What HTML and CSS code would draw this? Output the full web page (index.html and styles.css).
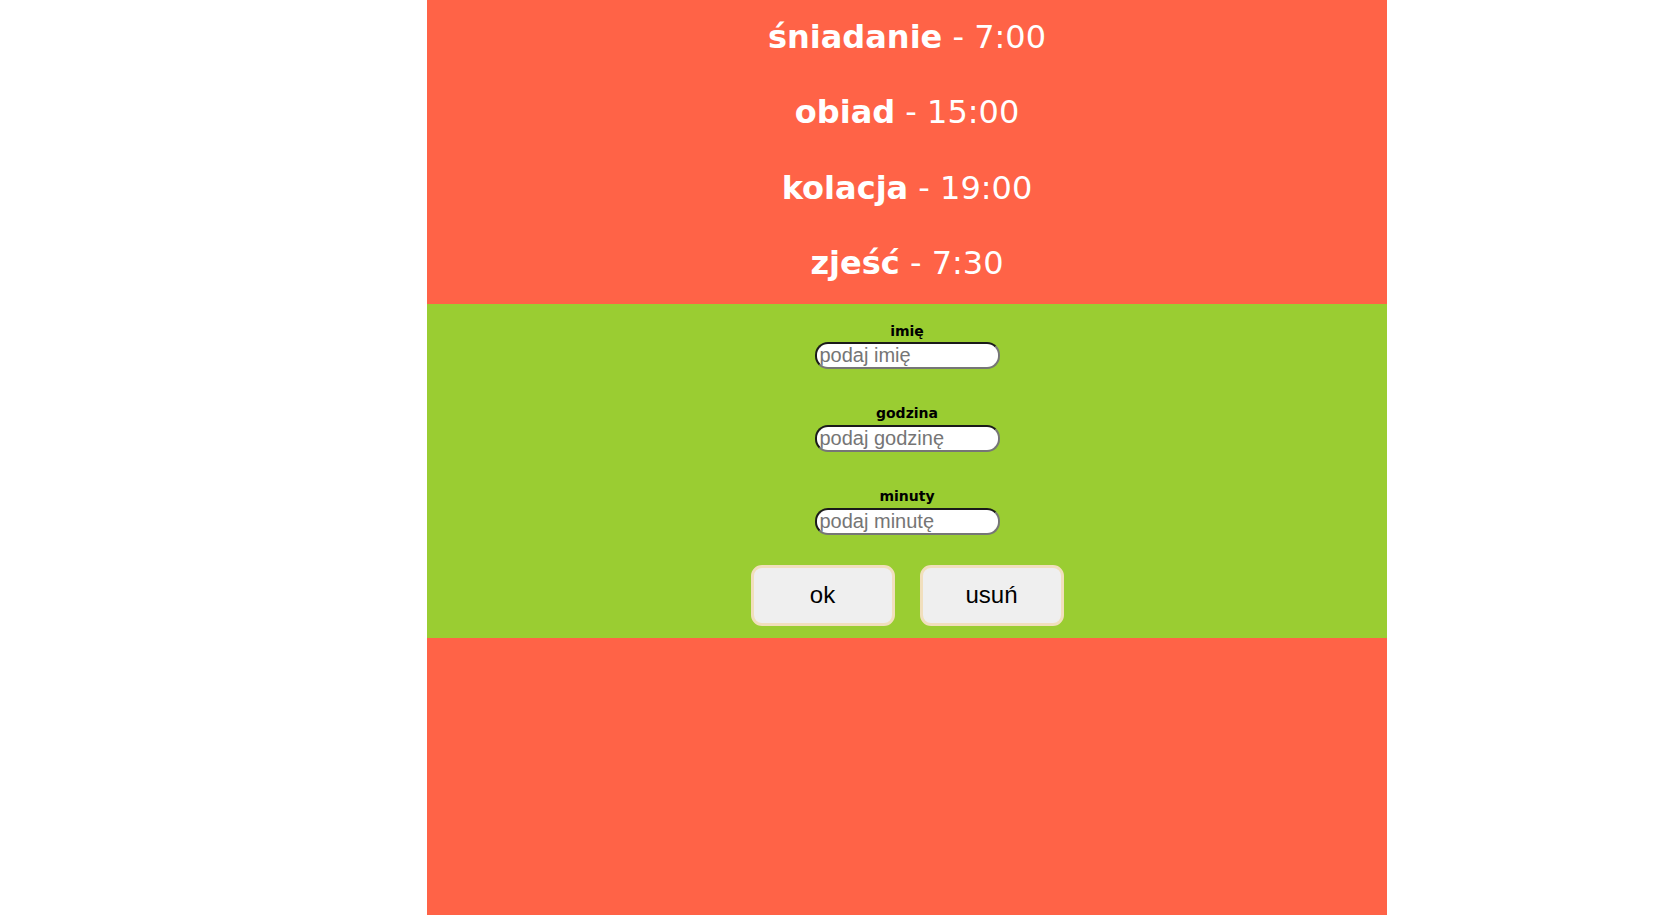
FILE: index.html
```html
<!DOCTYPE html>
<html lang="pl">
<head>
<meta charset="utf-8">
<title>Posiłki</title>
<link rel="stylesheet" href="styles.css">
</head>
<body>
<div class="page">
  <header class="menu">
    <p class="meal"><b>śniadanie</b> - 7:00</p>
    <p class="meal"><b>obiad</b> - 15:00</p>
    <p class="meal"><b>kolacja</b> - 19:00</p>
    <p class="meal"><b>zjeść</b> - 7:30</p>
  </header>
  <form class="form">
    <div class="field">
      <label class="label" for="imie">imię</label>
      <input class="input" id="imie" type="text" placeholder="podaj imię">
    </div>
    <div class="field">
      <label class="label" for="godzina">godzina</label>
      <input class="input" id="godzina" type="text" placeholder="podaj godzinę">
    </div>
    <div class="field">
      <label class="label" for="minuty">minuty</label>
      <input class="input" id="minuty" type="text" placeholder="podaj minutę">
    </div>
    <div class="buttons">
      <button class="btn" type="button">ok</button>
      <button class="btn" type="button">usuń</button>
    </div>
  </form>
</div>
</body>
</html>
```

FILE: styles.css
```css
html, body {
  margin: 0;
  padding: 0;
  background: #ffffff;
}

.page {
  width: 960px;
  margin-left: 427px;
  min-height: 100vh;
  background: #ff6347;
  display: flex;
  flex-direction: column;
}

.menu {
  display: flex;
  flex-direction: column;
  align-items: center;
  gap: 30.8px;
  padding: 15px 0 18px;
  height: 304px;
  box-sizing: border-box;
}

.meal {
  margin: 0;
  font-family: "Comic Sans MS", "DejaVu Sans", sans-serif;
  font-size: 32px;
  line-height: 44.6px;
  color: #ffffff;
  white-space: nowrap;
}

.meal b {
  font-weight: 700;
}

.form {
  background: #9acd32;
  height: 334px;
  box-sizing: border-box;
  padding-top: 15.5px;
  display: flex;
  flex-direction: column;
  align-items: center;
}

.field {
  display: flex;
  flex-direction: column;
  align-items: center;
  margin-bottom: 33.7px;
}

.label {
  font-family: "Comic Sans MS", "DejaVu Sans", sans-serif;
  font-weight: 700;
  font-size: 14px;
  line-height: 22.3px;
  color: #000000;
}

.input {
  width: 185px;
  height: 27px;
  box-sizing: border-box;
  padding: 0 0 0 3px;
  border: 2px solid;
  border-color: #1a1a1a #767676 #767676 #1a1a1a;
  border-radius: 13px;
  background: #ffffff;
  font-family: "Liberation Sans", Arial, sans-serif;
  font-size: 20px;
  outline: none;
}

.input::placeholder {
  color: #757575;
}

.buttons {
  display: flex;
  gap: 25px;
  margin-top: -3.7px;
}

.btn {
  width: 144px;
  height: 61px;
  box-sizing: border-box;
  border: 3px solid #f1dfbd;
  border-radius: 11px;
  background: #efefef;
  font-family: "Liberation Sans", Arial, sans-serif;
  font-size: 24px;
  color: #000000;
  padding: 0;
}
```
